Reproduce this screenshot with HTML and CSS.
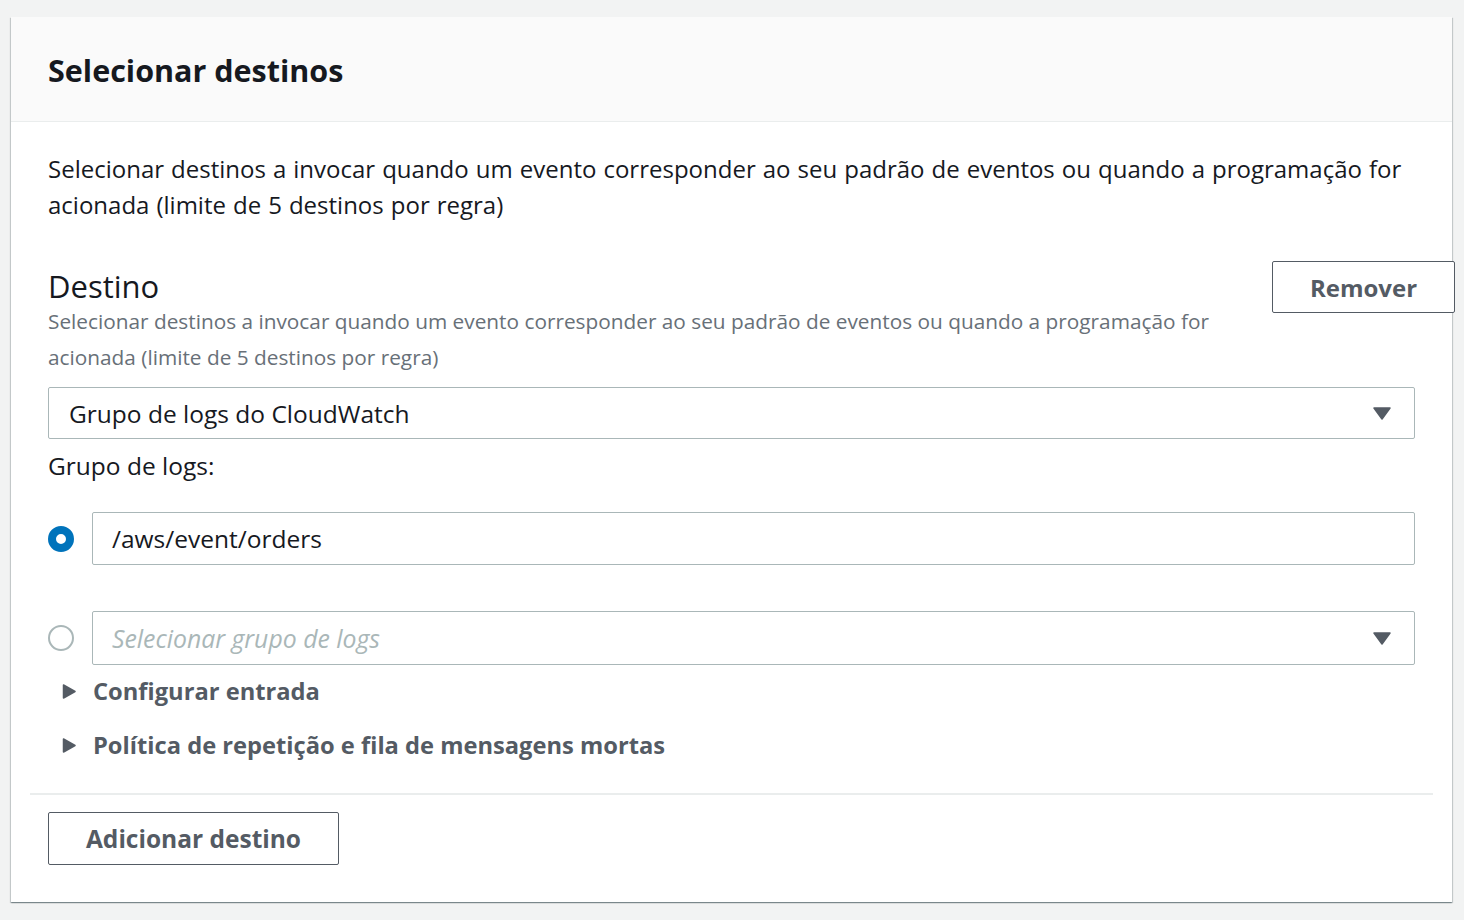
FILE: index.html
```html
<!DOCTYPE html>
<html lang="pt">
<head>
<meta charset="utf-8">
<link rel="stylesheet" href="styles.css">
</head>
<body>
<div class="card">
  <div class="card-header">
    <h2 class="card-title">Selecionar destinos</h2>
  </div>
  <div class="card-body">
    <p class="intro">Selecionar destinos a invocar quando um evento corresponder ao seu padrão de eventos ou quando a programação for acionada (limite de 5 destinos por regra)</p>
    <div class="target">
      <div class="target-head">
        <div class="target-titles">
          <h3 class="target-title">Destino</h3>
          <p class="target-desc">Selecionar destinos a invocar quando um evento corresponder ao seu padrão de eventos ou quando a programação for acionada (limite de 5 destinos por regra)</p>
        </div>
        <button class="btn btn-remove">Remover</button>
      </div>
      <div class="select">
        <span class="select-value">Grupo de logs do CloudWatch</span>
        <svg class="caret" width="18" height="13" viewBox="0 0 18 13"><path d="M1 1 H17 L9 12 Z" fill="#545b64" stroke="#545b64" stroke-width="1.5" stroke-linejoin="round"/></svg>
      </div>
      <div class="field-label">Grupo de logs:</div>
      <div class="radio-row">
        <span class="radio radio-on"></span>
        <div class="input">/aws/event/orders</div>
      </div>
      <div class="radio-row radio-row-2">
        <span class="radio"></span>
        <div class="select input-select">
          <span class="placeholder">Selecionar grupo de logs</span>
          <svg class="caret" width="18" height="13" viewBox="0 0 18 13"><path d="M1 1 H17 L9 12 Z" fill="#545b64" stroke="#545b64" stroke-width="1.5" stroke-linejoin="round"/></svg>
        </div>
      </div>
      <div class="expanders">
        <div class="expander">
          <svg class="exp-caret" width="14" height="15" viewBox="0 0 14 15"><path d="M1.5 1 L13 7.5 L1.5 14 Z" fill="#545b64" stroke="#545b64" stroke-width="1.5" stroke-linejoin="round"/></svg>
          <span>Configurar entrada</span>
        </div>
        <div class="expander">
          <svg class="exp-caret" width="14" height="15" viewBox="0 0 14 15"><path d="M1.5 1 L13 7.5 L1.5 14 Z" fill="#545b64" stroke="#545b64" stroke-width="1.5" stroke-linejoin="round"/></svg>
          <span>Política de repetição e fila de mensagens mortas</span>
        </div>
      </div>
    </div>
    <div class="divider"></div>
    <button class="btn btn-add">Adicionar destino</button>
  </div>
</div>
</body>
</html>
```

FILE: styles.css
```css
html, body {
  margin: 0;
  padding: 0;
}
body {
  background: #f2f3f3;
  font-family: "Open Sans", "Noto Sans", sans-serif;
  color: #16191f;
  width: 1464px;
  height: 920px;
  overflow: hidden;
}
.card {
  margin: 17px 0 0 11px;
  width: 1441px;
  background: #fff;
  box-shadow: 0 1px 1px 0 rgba(0, 28, 36, 0.3), 1px 1px 1px 0 rgba(0, 28, 36, 0.15), -1px 1px 1px 0 rgba(0, 28, 36, 0.15);
}
.card-header {
  background: #fafafa;
  border-bottom: 1px solid #eaeded;
  height: 105px;
  box-sizing: border-box;
  display: flex;
  align-items: center;
  padding: 2px 37px 0;
}
.card-title {
  margin: 0;
  font-size: 30.5px;
  line-height: 36px;
  font-weight: 700;
  color: #16191f;
}
.card-body {
  padding: 29px 37px 37px;
}
.intro {
  margin: 0;
  font-size: 24px;
  word-spacing: 0.8px;
  line-height: 36px;
}
.target {
  margin-top: 46px;
}
.target-head {
  display: flex;
  justify-content: space-between;
  align-items: flex-start;
}
.target-title {
  margin: 0;
  font-size: 31px;
  font-weight: 400;
  line-height: 34px;
}
.target-desc {
  margin: 0;
  font-size: 20.8px;
  line-height: 36px;
  color: #687078;
  max-width: 1185px;
}
.btn {
  font-family: inherit;
  background: #fff;
  border: 1px solid #545b64;
  border-radius: 2px;
  color: #545b64;
  font-weight: 700;
  font-size: 24px;
  height: 53px;
  padding: 0;
}
.btn-remove {
  margin-top: -8px;
  margin-right: -40px;
  width: 183px;
  height: 52px;
}
.select {
  margin-top: 12px;
  height: 52px;
  box-sizing: border-box;
  border: 1px solid #aab7b8;
  border-radius: 2px;
  display: flex;
  align-items: center;
  justify-content: space-between;
  padding: 0 23px 0 20px;
  font-size: 24.5px;
}
.field-label {
  margin-top: 13px;
  font-size: 24.5px;
  line-height: 28px;
}
.radio-row {
  margin-top: 32px;
  display: flex;
  align-items: center;
  gap: 18px;
}
.radio-row-2 {
  margin-top: 46px;
}
.radio {
  width: 26px;
  height: 26px;
  box-sizing: border-box;
  border-radius: 50%;
  border: 2px solid #aab7b8;
  flex: none;
}
.radio-on {
  border: 8px solid #0073bb;
}
.input {
  flex: 1;
  height: 53px;
  box-sizing: border-box;
  border: 1px solid #aab7b8;
  border-radius: 2px;
  display: flex;
  align-items: center;
  padding-left: 19px;
  font-size: 24.5px;
}
.input-select {
  flex: 1;
  margin-top: 0;
  height: 54px;
  padding-left: 19px;
}
.placeholder {
  color: #aab7b8;
  font-style: italic;
  font-size: 24.8px;
}
.expanders {
  margin-top: -1px;
}
.expander {
  display: flex;
  align-items: center;
  gap: 17px;
  padding-left: 14px;
  height: 54px;
  font-size: 23.7px;
  font-weight: 700;
  color: #545b64;
}
.divider {
  margin: 21px -18px 0 -18px;
  height: 2px;
  background: #eaeded;
}
.btn-add {
  margin-top: 17px;
  width: 291px;
  font-size: 24.5px;
}
```
